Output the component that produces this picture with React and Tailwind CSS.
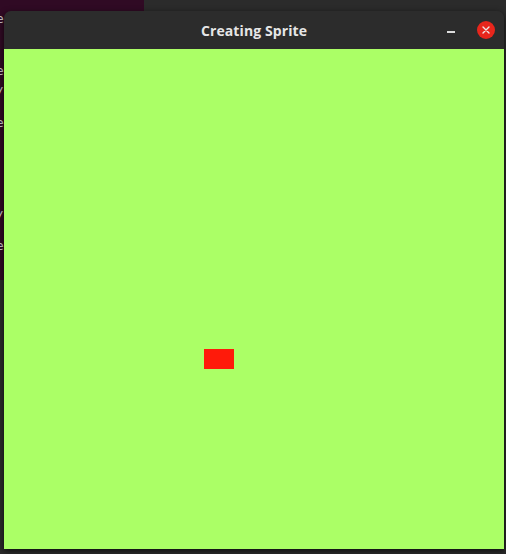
import React from "react";

const fragments = [
  { top: 12, ch: "e" },
  { top: 64, ch: "e" },
  { top: 85, ch: "/" },
  { top: 116, ch: "e" },
  { top: 209, ch: "/" },
  { top: 239, ch: "e" },
];

function TitleBar() {
  return (
    <div className="relative h-[38px] flex items-center justify-center bg-[#2c2c2c] rounded-t-[7px] shrink-0">
      <span className="font-['Open_Sans',sans-serif] font-bold text-[14px] text-[#e6e6e6] tracking-[0.1px]">
        Creating Sprite
      </span>
      <div className="absolute right-[9px] top-0 h-full flex items-center gap-[22px]">
        <div className="w-[8px] h-[1.5px] bg-[#dcdcdc] mt-[4px]" />
        <div className="w-[18px] h-[18px] rounded-full bg-[#e8261c] flex items-center justify-center">
          <svg width="8" height="8" viewBox="0 0 8 8">
            <path d="M1 1L7 7M7 1L1 7" stroke="#f0e6e6" strokeWidth="1.4" strokeLinecap="round" />
          </svg>
        </div>
      </div>
    </div>
  );
}

export default function App() {
  return (
    <div className="relative w-[506px] h-[554px] overflow-hidden bg-[#2b2b2b]">
      {/* terminal behind */}
      <div className="absolute left-0 top-0 w-[144px] h-[280px] bg-[#300a24] font-['DejaVu_Sans_Mono',monospace] text-[13px] text-[#cfc6cb]">
        {fragments.map((f, i) => (
          <span key={i} className="absolute left-[-4px] leading-none" style={{ top: f.top }}>
            {f.ch}
          </span>
        ))}
      </div>

      {/* window */}
      <div className="absolute left-[4px] top-[11px] w-[500px] flex flex-col rounded-t-[7px] shadow-[0_2px_6px_rgba(0,0,0,0.7)]">
        <TitleBar />
        <div className="relative w-[500px] h-[500px] bg-[#abff66]">
          <div className="absolute left-[200px] top-[300px] w-[30px] h-[20px] bg-[#ff1a0a]" />
        </div>
      </div>
    </div>
  );
}
